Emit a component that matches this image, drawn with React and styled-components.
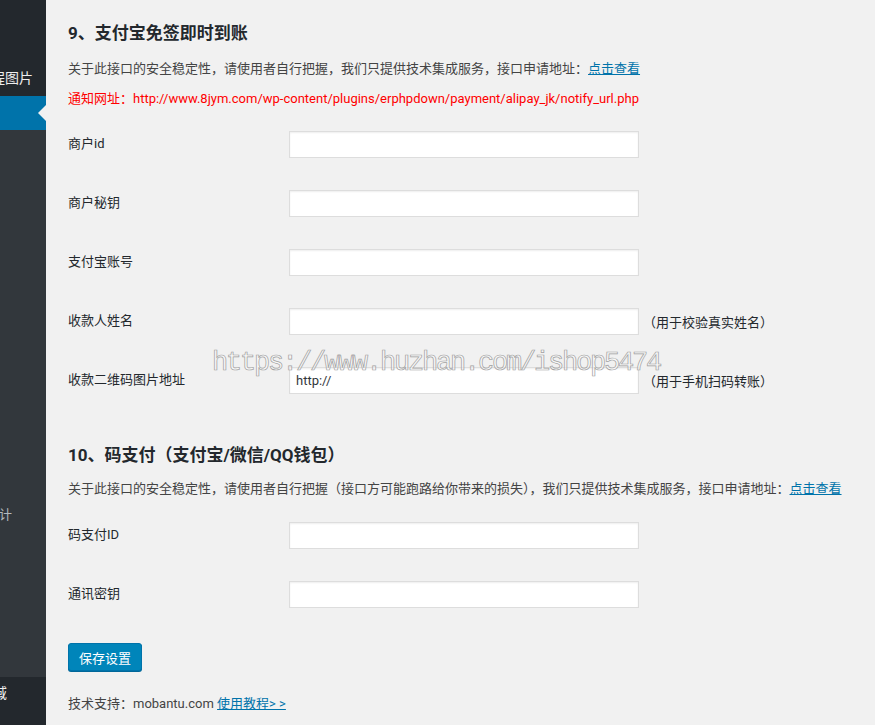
import React from "react";
import styled, { createGlobalStyle } from "styled-components";

const GlobalStyle = createGlobalStyle`
  html, body {
    margin: 0;
    padding: 0;
    background: #f1f1f1;
  }
  body {
    font-family: Roboto, "Noto Sans CJK SC", sans-serif;
    font-size: 13px;
    color: #444;
    overflow: hidden;
  }
`;

const Page = styled.div`
  display: flex;
  width: 875px;
  height: 725px;
  position: relative;
  overflow: hidden;
`;

const Sidebar = styled.div`
  width: 46px;
  flex-shrink: 0;
  display: flex;
  flex-direction: column;
  background: #32373c;
  overflow: hidden;
`;

const MenuTop = styled.div`
  height: 96px;
  background: #23282d;
  display: flex;
  align-items: flex-end;
  padding-bottom: 8px;
  box-sizing: border-box;
`;

const MenuText = styled.span`
  white-space: nowrap;
  font-size: ${({ size }) => size || 14}px;
  line-height: 20px;
  color: ${({ color }) => color || "#eee"};
  margin-left: ${({ offset }) => offset}px;
`;

const ActiveItem = styled.div`
  height: 34px;
  background: #0073aa;
  position: relative;
  &::after {
    content: "";
    position: absolute;
    right: 0;
    top: 50%;
    margin-top: -8px;
    border: 8px solid transparent;
    border-right-color: #f1f1f1;
  }
`;

const SubMenu = styled.div`
  flex: 1;
  padding-top: 375px;
`;

const MenuBottom = styled.div`
  height: 48px;
  background: #23282d;
  display: flex;
  align-items: center;
  padding-bottom: 16px;
  box-sizing: border-box;
`;

const Main = styled.div`
  flex: 1;
  padding: 21px 0 0 22px;
`;

const Heading = styled.h2`
  margin: 0 0 ${({ gap }) => gap}px;
  font-size: 17px;
  line-height: 24px;
  font-weight: bold;
  color: #23282d;
`;

const Desc = styled.p`
  margin: 0 0 ${({ gap }) => gap}px;
  line-height: 20px;
  color: ${({ red }) => (red ? "#ff0000" : "#444")};
  white-space: nowrap;
`;

const Link = styled.a`
  color: #0073aa;
  text-decoration: underline;
`;

const FormTable = styled.div`
  display: flex;
  flex-direction: column;
  gap: 32px;
  margin-bottom: ${({ gap }) => gap}px;
`;

const Row = styled.div`
  display: grid;
  grid-template-columns: 221px auto auto;
  justify-content: start;
  align-items: center;
  height: 27px;
`;

const Label = styled.label`
  color: #23282d;
  line-height: 20px;
  margin-top: -2px;
`;

const Input = styled.input`
  width: 350px;
  height: 27px;
  box-sizing: border-box;
  border: 1px solid #ddd;
  box-shadow: inset 0 1px 2px rgba(0, 0, 0, 0.07);
  background: #fff;
  padding: 0 6px;
  font-family: inherit;
  font-size: 13px;
  color: #32373c;
  outline: none;
`;

const Hint = styled.span`
  margin-left: 4px;
  color: #23282d;
`;

const Button = styled.button`
  display: block;
  width: 74px;
  height: 28px;
  padding: 0;
  border: 1px solid #0073aa;
  border-radius: 3px;
  background: #0085ba;
  box-shadow: 0 1px 0 #006799;
  color: #fff;
  font-family: inherit;
  font-size: 13px;
  margin-bottom: 23px;
`;

const Watermark = styled.div`
  position: absolute;
  left: 212px;
  top: 345px;
  font-family: "Liberation Mono", monospace;
  font-size: 27px;
  letter-spacing: -2.2px;
  line-height: 36px;
  color: rgba(255, 255, 255, 0.5);
  -webkit-text-stroke: 0.7px #a0a0a0;
  white-space: nowrap;
  pointer-events: none;
`;

const section1 = [
  { label: "商户id" },
  { label: "商户秘钥" },
  { label: "支付宝账号" },
  { label: "收款人姓名", hint: "（用于校验真实姓名）" },
  { label: "收款二维码图片地址", value: "http://", hint: "（用于手机扫码转账）" },
];

const section2 = [{ label: "码支付ID" }, { label: "通讯密钥" }];

const Fields = ({ rows, gap }) => (
  <FormTable gap={gap}>
    {rows.map((r) => (
      <Row key={r.label}>
        <Label>{r.label}</Label>
        <Input type="text" defaultValue={r.value || ""} />
        {r.hint && <Hint>{r.hint}</Hint>}
      </Row>
    ))}
  </FormTable>
);

export default function App() {
  return (
    <>
      <GlobalStyle />
      <Page>
        <Sidebar>
          <MenuTop>
            <MenuText offset={-23}>远程图片</MenuText>
          </MenuTop>
          <ActiveItem />
          <SubMenu>
            <MenuText offset={-14} size={13} color="#b4b9be">统计</MenuText>
          </SubMenu>
          <MenuBottom>
            <MenuText offset={-21}>区域</MenuText>
          </MenuBottom>
        </Sidebar>
        <Main>
          <Heading gap={14}>9、支付宝免签即时到账</Heading>
          <Desc gap={10}>
            关于此接口的安全稳定性，请使用者自行把握，我们只提供技术集成服务，接口申请地址：
            <Link href="#">点击查看</Link>
          </Desc>
          <Desc red gap={22}>
            通知网址：http://www.8jym.com/wp-content/plugins/erphpdown/payment/alipay_jk/notify_url.php
          </Desc>
          <Fields rows={section1} gap={49} />
          <Heading gap={12}>10、码支付（支付宝/微信/QQ钱包）</Heading>
          <Desc gap={23}>
            关于此接口的安全稳定性，请使用者自行把握（接口方可能跑路给你带来的损失），我们只提供技术集成服务，接口申请地址：
            <Link href="#">点击查看</Link>
          </Desc>
          <Fields rows={section2} gap={35} />
          <Button>保存设置</Button>
          <Desc gap={0}>
            技术支持：mobantu.com <Link href="#">使用教程&gt; &gt;</Link>
          </Desc>
        </Main>
        <Watermark>https://www.huzhan.com/ishop5474</Watermark>
      </Page>
    </>
  );
}
